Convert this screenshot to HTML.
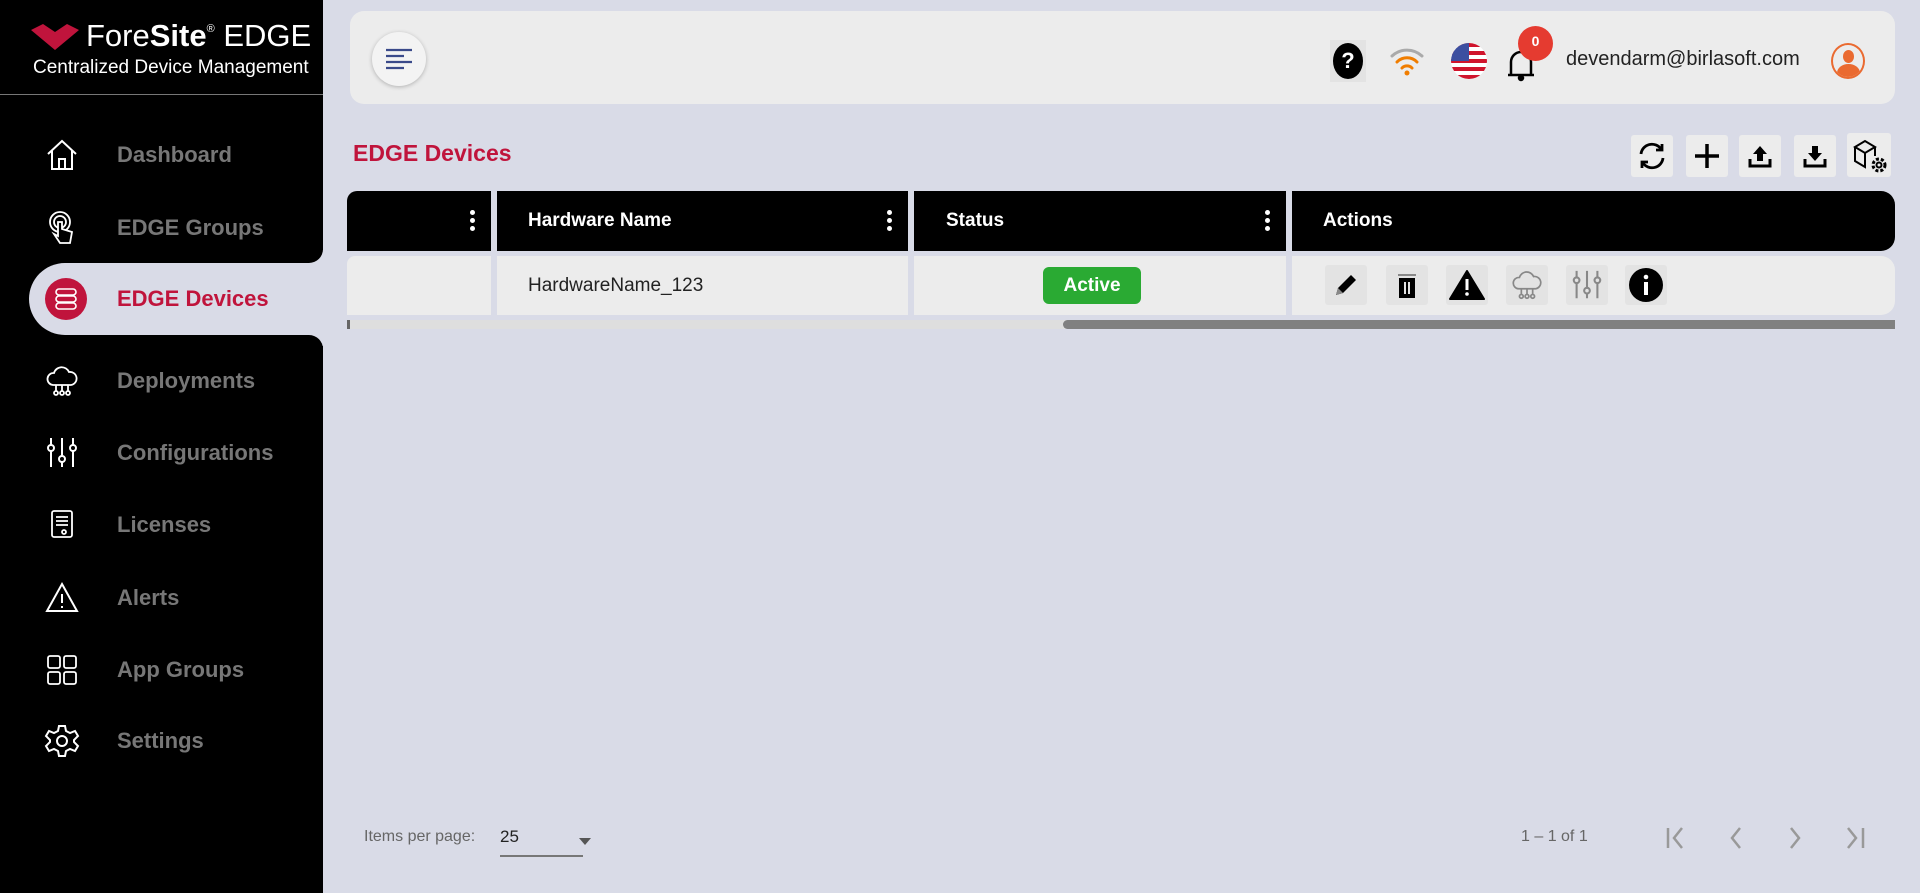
<!DOCTYPE html>
<html><head><meta charset="utf-8"><style>
*{box-sizing:border-box;margin:0;padding:0}
body{width:1920px;height:893px;background:#d9dbe7;font-family:"Liberation Sans",sans-serif;position:relative;overflow:hidden}
.abs{position:absolute}
#side{left:0;top:0;width:323px;height:893px;background:#000}
.nav{position:absolute;left:0;width:290px;height:60px;display:flex;align-items:center}
.nav svg{position:absolute;left:44px;width:36px;height:36px}
.nav span{position:absolute;left:117px;font-size:22px;font-weight:bold;color:#777}
.tb{position:absolute;top:135px;width:42px;height:42px;background:#ececec;border-radius:3px;display:flex;align-items:center;justify-content:center}
.ai{position:absolute;top:265px;width:42px;height:40px;background:#e3e3e3;border-radius:3px;display:flex;align-items:center;justify-content:center}
.hd{position:absolute;top:191px;height:60px;background:#000;color:#fff;font-weight:bold;font-size:19px;display:flex;align-items:center}
.dots{position:absolute;right:16px;top:19px;width:5px}
.dots i{display:block;width:5px;height:5px;border-radius:50%;background:#fff;margin-bottom:3px}
.cell{position:absolute;top:256px;height:59px;background:#ececec;display:flex;align-items:center}
</style></head><body>
<div id="side" class="abs"></div>
<div class="abs" style="left:290px;top:250px;width:33px;height:96px;background:#d9dbe7"></div>
<div class="abs" style="left:290px;top:200px;width:33px;height:63px;background:#000;border-bottom-right-radius:14px"></div>
<div class="abs" style="left:290px;top:335px;width:33px;height:40px;background:#000;border-top-right-radius:14px"></div>
<div class="abs" style="left:29px;top:263px;width:300px;height:72px;background:#d9dbe7;border-radius:36px 0 0 36px"></div>

<svg class="abs" style="left:31px;top:24px" width="48" height="28" viewBox="0 0 48 28"><path d="M0 6 L12 0 L24 8 L36 0 L48 6 L24 26 Z" fill="#c0143c"/></svg>
<div class="abs" style="left:86px;top:18px;color:#fff;font-size:31px;font-family:'Liberation Sans Narrow','Liberation Sans',sans-serif">Fore<b>Site</b><sup style="font-size:11px;vertical-align:14px">®</sup> EDGE</div>
<div class="abs" style="left:33px;top:57px;color:#fff;font-size:19px;font-family:'Liberation Sans Narrow','Liberation Sans',sans-serif">Centralized Device Management</div>
<div class="abs" style="left:0;top:94px;width:323px;height:1px;background:#777"></div>
<div class="nav" style="top:125px"><svg viewBox="0 0 36 36" fill="none" stroke="#fff" stroke-width="2"><path d="M4 17 L18 4 L32 17 M8 14 V32 H28 V14 M15 32 V22 H21 V32"/></svg><span>Dashboard</span></div>
<div class="nav" style="top:198px"><svg viewBox="0 0 36 36" fill="none" stroke="#fff" stroke-width="1.8"><circle cx="16" cy="12" r="10"/><circle cx="16" cy="12" r="6"/><path d="M14 12 V26 L10 24 L16 33 H26 L28 22 L18 19 V12 Z" fill="#000"/></svg><span>EDGE Groups</span></div>

<div class="abs" style="left:45px;top:278px;width:42px;height:42px;border-radius:50%;background:#c0143c"></div>
<svg class="abs" style="left:52px;top:285px" width="28" height="28" viewBox="0 0 28 28" fill="none" stroke="#fff" stroke-width="1.6"><rect x="4" y="4" width="20" height="6" rx="3"/><rect x="4" y="11" width="20" height="6" rx="3"/><rect x="4" y="18" width="20" height="6" rx="3"/></svg>
<div class="abs" style="left:117px;top:286px;font-size:22px;font-weight:bold;color:#c0143c">EDGE Devices</div>
<div class="abs" style="left:0;top:350px;width:323px;height:543px">
 <div class="nav" style="top:1px"><svg viewBox="0 0 36 36" fill="none" stroke="#fff" stroke-width="1.8"><path d="M9 22 A6 6 0 0 1 10 10 A8 8 0 0 1 25 9 A6 6 0 0 1 27 22 Z M12 22 V28 M18 22 V28 M24 22 V28"/><circle cx="12" cy="30" r="2"/><circle cx="18" cy="30" r="2"/><circle cx="24" cy="30" r="2"/></svg><span>Deployments</span></div>
 <div class="nav" style="top:73px"><svg viewBox="0 0 36 36" fill="none" stroke="#fff" stroke-width="2"><path d="M7 3 V32 M18 3 V32 M29 3 V32"/><circle cx="7" cy="13" r="3" fill="#000"/><circle cx="18" cy="24" r="3" fill="#000"/><circle cx="29" cy="13" r="3" fill="#000"/></svg><span>Configurations</span></div>
 <div class="nav" style="top:145px"><svg viewBox="0 0 36 36" fill="none" stroke="#fff" stroke-width="1.8"><rect x="8" y="4" width="20" height="26" rx="2"/><path d="M12 10 H24 M12 14 H24 M12 18 H24"/><circle cx="20" cy="25" r="2"/></svg><span>Licenses</span></div>
 <div class="nav" style="top:218px"><svg viewBox="0 0 36 36" fill="none" stroke="#fff" stroke-width="2"><path d="M18 4 L33 31 H3 Z M18 14 V23 M18 26 V28"/></svg><span>Alerts</span></div>
 <div class="nav" style="top:290px"><svg viewBox="0 0 36 36" fill="none" stroke="#fff" stroke-width="1.8"><rect x="4" y="4" width="12" height="12" rx="2"/><rect x="20" y="4" width="12" height="12" rx="2"/><rect x="4" y="20" width="12" height="12" rx="2"/><rect x="20" y="20" width="12" height="12" rx="2"/></svg><span>App Groups</span></div>
 <div class="nav" style="top:361px"><svg viewBox="0 0 36 36" fill="none" stroke="#fff" stroke-width="2"><circle cx="18" cy="18" r="5"/><path d="M15 3 H21 L22 8 L26 10 L31 8 L34 13 L30 17 V19 L34 23 L31 28 L26 26 L22 28 L21 33 H15 L14 28 L10 26 L5 28 L2 23 L6 19 V17 L2 13 L5 8 L10 10 L14 8 Z"/></svg><span>Settings</span></div>
</div>

<!-- header -->
<div class="abs" style="left:350px;top:11px;width:1545px;height:93px;background:#ececec;border-radius:14px"></div>
<div class="abs" style="left:372px;top:32px;width:54px;height:54px;border-radius:50%;background:#f3f3f3;box-shadow:0 1px 4px rgba(0,0,0,.25)"></div>
<svg class="abs" style="left:384px;top:46px" width="30" height="26" viewBox="0 0 30 26" stroke="#3a4a8a" stroke-width="2.2"><path d="M2 4 H28 M2 10 H20 M2 16 H28 M2 22 H20"/></svg>
<div class="abs" style="left:1330px;top:40px;width:36px;height:42px;background:#e3e3e3"></div>
<div class="abs" style="left:1333px;top:43px;width:30px;height:36px;border-radius:50%;background:#000;color:#fff;font-weight:bold;font-size:22px;text-align:center;line-height:36px">?</div>
<svg class="abs" style="left:1389px;top:44px" width="36" height="34" viewBox="0 0 36 34" fill="none" stroke-linecap="round"><path d="M3 12 A22 22 0 0 1 33 12" stroke="#aaa" stroke-width="3"/><path d="M8 18 A14 14 0 0 1 28 18" stroke="#f07d00" stroke-width="3"/><path d="M13 24 A7 7 0 0 1 23 24" stroke="#f07d00" stroke-width="3"/><circle cx="18" cy="29" r="2.5" fill="#f07d00"/></svg>
<svg class="abs" style="left:1451px;top:43px" width="36" height="36" viewBox="0 0 36 36"><defs><clipPath id="c"><circle cx="18" cy="18" r="18"/></clipPath></defs><g clip-path="url(#c)"><rect width="36" height="36" fill="#fff"/><g fill="#d0142c"><rect y="0" width="36" height="4"/><rect y="8" width="36" height="4"/><rect y="16" width="36" height="4"/><rect y="24" width="36" height="4"/><rect y="32" width="36" height="4"/></g><rect width="18" height="18" fill="#3c4fa0"/></g></svg>
<svg class="abs" style="left:1506px;top:48px" width="30" height="34" viewBox="0 0 30 34" fill="none" stroke="#000" stroke-width="2.5"><path d="M5 26 V14 A10 10 0 0 1 25 14 V26 M2 27 H28"/><circle cx="15" cy="30" r="2" fill="#000"/></svg>
<div class="abs" style="left:1518px;top:26px;width:35px;height:35px;border-radius:50%;background:#e53b30;color:#fff;font-weight:bold;font-size:14px;text-align:center;line-height:30px">0</div>
<div class="abs" style="left:1566px;top:48px;font-size:20px;color:#222">devendarm@birlasoft.com</div>
<div class="abs" style="left:1831px;top:43px;width:34px;height:36px;border-radius:50%;border:2px solid #ea6a30;overflow:hidden;background:#ececec"><div style="position:absolute;left:10px;top:5px;width:11px;height:13px;border-radius:50%;background:#ea6a30"></div><div style="position:absolute;left:4px;top:19px;width:23px;height:18px;border-radius:50% 50% 0 0;background:#ea6a30"></div></div>

<div class="abs" style="left:353px;top:140px;font-size:23px;font-weight:bold;color:#c0143c">EDGE Devices</div>
<div class="tb" style="left:1631px"><svg width="30" height="30" viewBox="0 0 30 30" fill="none" stroke="#000" stroke-width="2.8"><path d="M4 13 A11 11 0 0 1 24 8 M26 17 A11 11 0 0 1 6 22"/><path d="M25 3 V9 H19 M5 27 V21 H11"/></svg></div>
<div class="tb" style="left:1686px"><svg width="30" height="30" viewBox="0 0 30 30" stroke="#000" stroke-width="3.5"><path d="M15 3 V27 M3 15 H27"/></svg></div>
<div class="tb" style="left:1739px"><svg width="28" height="28" viewBox="0 0 28 28" fill="#000"><path d="M14 4 L21 12 H17 V19 H11 V12 H7 Z"/><path d="M4 17 V24 H24 V17" fill="none" stroke="#000" stroke-width="3"/></svg></div>
<div class="tb" style="left:1794px"><svg width="28" height="28" viewBox="0 0 28 28" fill="#000"><path d="M14 19 L21 11 H17 V4 H11 V11 H7 Z"/><path d="M4 17 V24 H24 V17" fill="none" stroke="#000" stroke-width="3"/></svg></div>
<div class="tb" style="left:1847px;width:44px;height:44px;top:133px"><svg width="38" height="38" viewBox="0 0 38 38" fill="none" stroke="#000" stroke-width="2"><path d="M5 11 L15 5 L25 11 L15 17 Z M5 11 V25 L15 31 V17 M25 11 V20"/><circle cx="29" cy="29" r="6" stroke-width="3" stroke-dasharray="3 2"/><circle cx="29" cy="29" r="2.5"/></svg></div>

<!-- table -->
<div class="hd" style="left:347px;width:144px;border-radius:10px 0 0 0"><div class="dots"><i></i><i></i><i></i></div></div>
<div class="hd" style="left:497px;width:411px;padding-left:31px">Hardware Name<div class="dots"><i></i><i></i><i></i></div></div>
<div class="hd" style="left:914px;width:372px;padding-left:32px">Status<div class="dots"><i></i><i></i><i></i></div></div>
<div class="hd" style="left:1292px;width:603px;padding-left:31px;border-radius:0 14px 14px 0">Actions</div>
<div class="cell" style="left:347px;width:144px;border-radius:8px 0 0 0"></div>
<div class="cell" style="left:497px;width:411px;padding-left:31px;font-size:19px;color:#222">HardwareName_123</div>
<div class="cell" style="left:914px;width:372px"><div style="position:absolute;left:129px;top:11px;width:98px;height:37px;background:#2aaa33;border-radius:6px;color:#fff;font-weight:bold;font-size:19px;text-align:center;line-height:37px">Active</div></div>
<div class="cell" style="left:1292px;width:603px;border-radius:0 14px 14px 0"></div>
<div class="ai" style="left:1325px"><svg width="28" height="28" viewBox="0 0 28 28"><path d="M4 24 L6 17 L19 4 L24 9 L11 22 Z" fill="#000"/><path d="M4 24 L6 17 L11 22 Z" fill="#888"/></svg></div>
<div class="ai" style="left:1386px"><svg width="28" height="30" viewBox="0 0 28 30"><rect x="5" y="4" width="18" height="2" fill="#888"/><rect x="6" y="8" width="16" height="20" fill="#000"/><rect x="11" y="12" width="2" height="12" fill="#e3e3e3"/><rect x="15" y="12" width="2" height="12" fill="#e3e3e3"/></svg></div>
<div class="ai" style="left:1446px"><svg width="36" height="32" viewBox="0 0 36 32"><path d="M18 2 L35 30 H1 Z" fill="#000" stroke="#000" stroke-linejoin="round" stroke-width="2"/><rect x="16.5" y="10" width="3" height="11" fill="#fff"/><circle cx="18" cy="25" r="1.8" fill="#fff"/></svg></div>
<div class="ai" style="left:1506px"><svg width="34" height="34" viewBox="0 0 36 36" fill="none" stroke="#888" stroke-width="1.8"><path d="M9 22 A6 6 0 0 1 10 10 A8 8 0 0 1 25 9 A6 6 0 0 1 27 22 Z M12 22 V28 M18 22 V28 M24 22 V28"/><circle cx="12" cy="30" r="2"/><circle cx="18" cy="30" r="2"/><circle cx="24" cy="30" r="2"/></svg></div>
<div class="ai" style="left:1566px"><svg width="34" height="34" viewBox="0 0 36 36" fill="none" stroke="#888" stroke-width="2.2"><path d="M7 3 V32 M18 3 V32 M29 3 V32"/><circle cx="7" cy="13" r="3" fill="#e3e3e3"/><circle cx="18" cy="24" r="3" fill="#e3e3e3"/><circle cx="29" cy="13" r="3" fill="#e3e3e3"/></svg></div>
<div class="ai" style="left:1625px"><svg width="36" height="36" viewBox="0 0 36 36"><circle cx="18" cy="18" r="17" fill="#000"/><rect x="16" y="15" width="4" height="13" fill="#fff"/><circle cx="18" cy="10" r="2.3" fill="#fff"/></svg></div>
<div class="abs" style="left:347px;top:320px;width:1548px;height:9px;background:#dedede"></div>
<div class="abs" style="left:347px;top:320px;width:3px;height:9px;background:#666"></div>
<div class="abs" style="left:1063px;top:320px;width:832px;height:9px;background:#808080;border-radius:5px 0 0 5px"></div>

<!-- footer -->
<div class="abs" style="left:364px;top:828px;font-size:16px;color:#666">Items per page:</div>
<div class="abs" style="left:500px;top:827px;font-size:17px;color:#222">25</div>
<div class="abs" style="left:500px;top:855px;width:83px;height:2px;background:#777"></div>
<div class="abs" style="left:579px;top:838px;width:0;height:0;border-left:6px solid transparent;border-right:6px solid transparent;border-top:7px solid #555"></div>
<div class="abs" style="left:1521px;top:828px;font-size:16px;color:#666">1 – 1 of 1</div>
<svg class="abs" style="left:1660px;top:822px" width="220" height="32" viewBox="0 0 220 32" fill="none" stroke="#999" stroke-width="2.5"><path d="M8 6 V26 M22 6 L14 16 L22 26"/><path d="M80 6 L72 16 L80 26"/><path d="M131 6 L139 16 L131 26"/><path d="M188 6 L196 16 L188 26 M203 6 V26"/></svg>
</body></html>
